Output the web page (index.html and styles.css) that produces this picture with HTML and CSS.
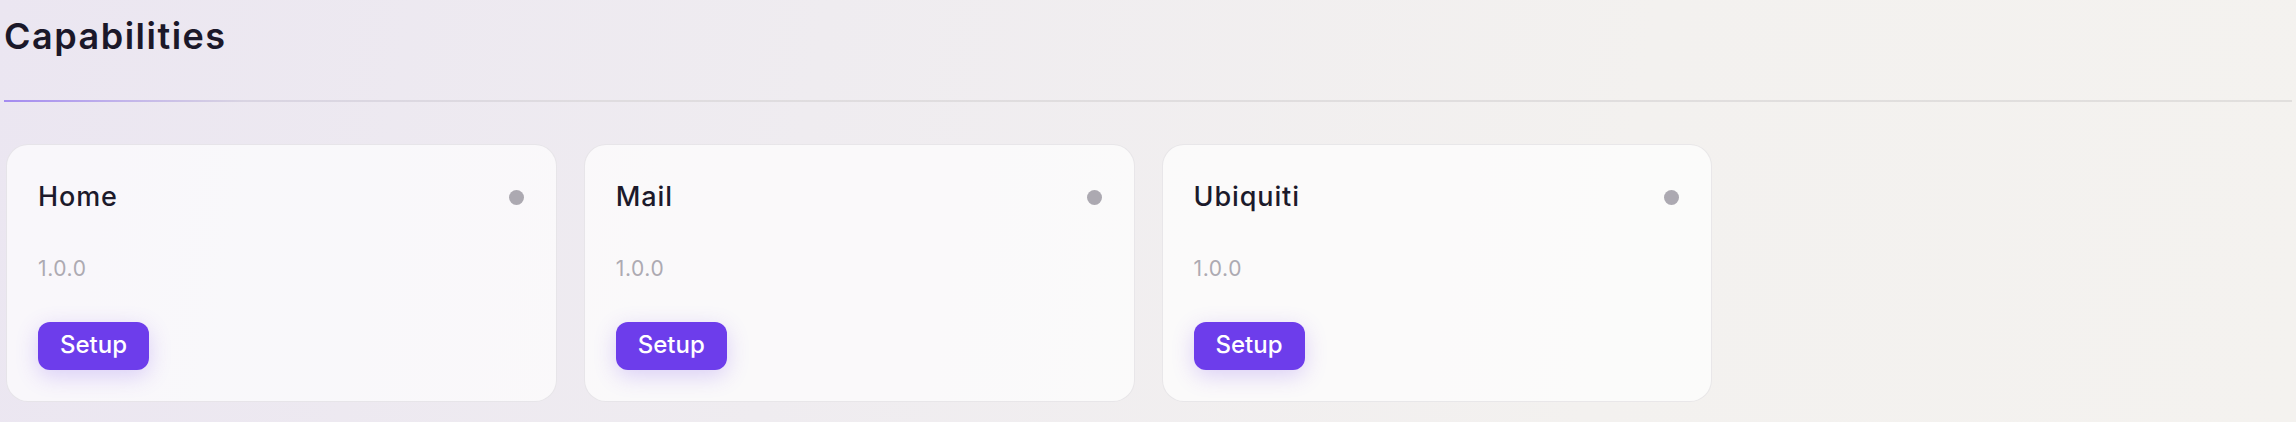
FILE: index.html
```html
<!DOCTYPE html>
<html lang="en">
<head>
<meta charset="utf-8">
<title>Capabilities</title>
<link rel="stylesheet" href="styles.css">
</head>
<body>
<main class="page">
  <header class="page-header">
    <h1 class="page-title">Capabilities</h1>
  </header>
  <div class="divider"></div>
  <section class="cap-grid">
    <article class="cap-card">
      <div class="cap-head">
        <h2 class="cap-name">Home</h2>
        <span class="status-dot"></span>
      </div>
      <div class="cap-version">1.0.0</div>
      <div class="cap-actions"><button class="btn-setup" type="button">Setup</button></div>
    </article>
    <article class="cap-card">
      <div class="cap-head">
        <h2 class="cap-name">Mail</h2>
        <span class="status-dot"></span>
      </div>
      <div class="cap-version">1.0.0</div>
      <div class="cap-actions"><button class="btn-setup" type="button">Setup</button></div>
    </article>
    <article class="cap-card">
      <div class="cap-head">
        <h2 class="cap-name">Ubiquiti</h2>
        <span class="status-dot"></span>
      </div>
      <div class="cap-version">1.0.0</div>
      <div class="cap-actions"><button class="btn-setup" type="button">Setup</button></div>
    </article>
  </section>
</main>
</body>
</html>
```
FILE: styles.css
```css
* { box-sizing: border-box; }

html, body {
  margin: 0;
  height: 100%;
}

body {
  font-family: Inter, "Noto Sans", "Liberation Sans", sans-serif;
  color: #1c1a2b;
  background: linear-gradient(100deg, #ebe6f1 0%, #efecf0 35%, #f3f1ef 70%, #f4f2ef 100%);
}

.page {
  padding: 9px 4px 0 4px;
}

.page-header {
  padding-bottom: 37px;
}

.page-title {
  margin: 0;
  font-size: 36px;
  line-height: 54px;
  font-weight: 600;
  letter-spacing: 1.5px;
  color: #1b1829;
}

.divider {
  height: 2px;
  background: linear-gradient(90deg, #a48bf0 0px, #c2b4ea 120px, #d9d4e2 240px, #dfdcdf 600px, #e1dfdd 100%);
}

.cap-grid {
  margin: 42px 2px 0 2px;
  display: grid;
  grid-template-columns: repeat(4, 1fr);
  gap: 27px;
}

.cap-card {
  background: rgba(255, 255, 255, 0.68);
  border: 1px solid rgba(70, 60, 80, 0.1);
  border-radius: 22px;
  padding: 31px;
}

.cap-head {
  display: flex;
  align-items: center;
  justify-content: space-between;
  margin-bottom: 35px;
}

.cap-name {
  margin: 0;
  font-size: 27px;
  line-height: 42px;
  font-weight: 500;
  letter-spacing: 0.9px;
  color: #1c1a2b;
}

.status-dot {
  width: 15px;
  height: 15px;
  border-radius: 50%;
  background: #aca9b1;
  margin-right: 1px;
}

.cap-version {
  font-size: 21px;
  line-height: 31.5px;
  letter-spacing: 0.6px;
  color: #adaab2;
  margin-bottom: 37.5px;
}

.cap-actions {
  display: flex;
}

.btn-setup {
  font-family: Inter, "Noto Sans", "Liberation Sans", sans-serif;
  font-size: 24px;
  line-height: 36px;
  font-weight: 500;
  color: #ffffff;
  background: #6d3deb;
  border: none;
  border-radius: 12px;
  padding: 5px 22px 7px 22px;
  box-shadow: 0 6px 22px rgba(109, 61, 235, 0.22);
  cursor: pointer;
}
```
